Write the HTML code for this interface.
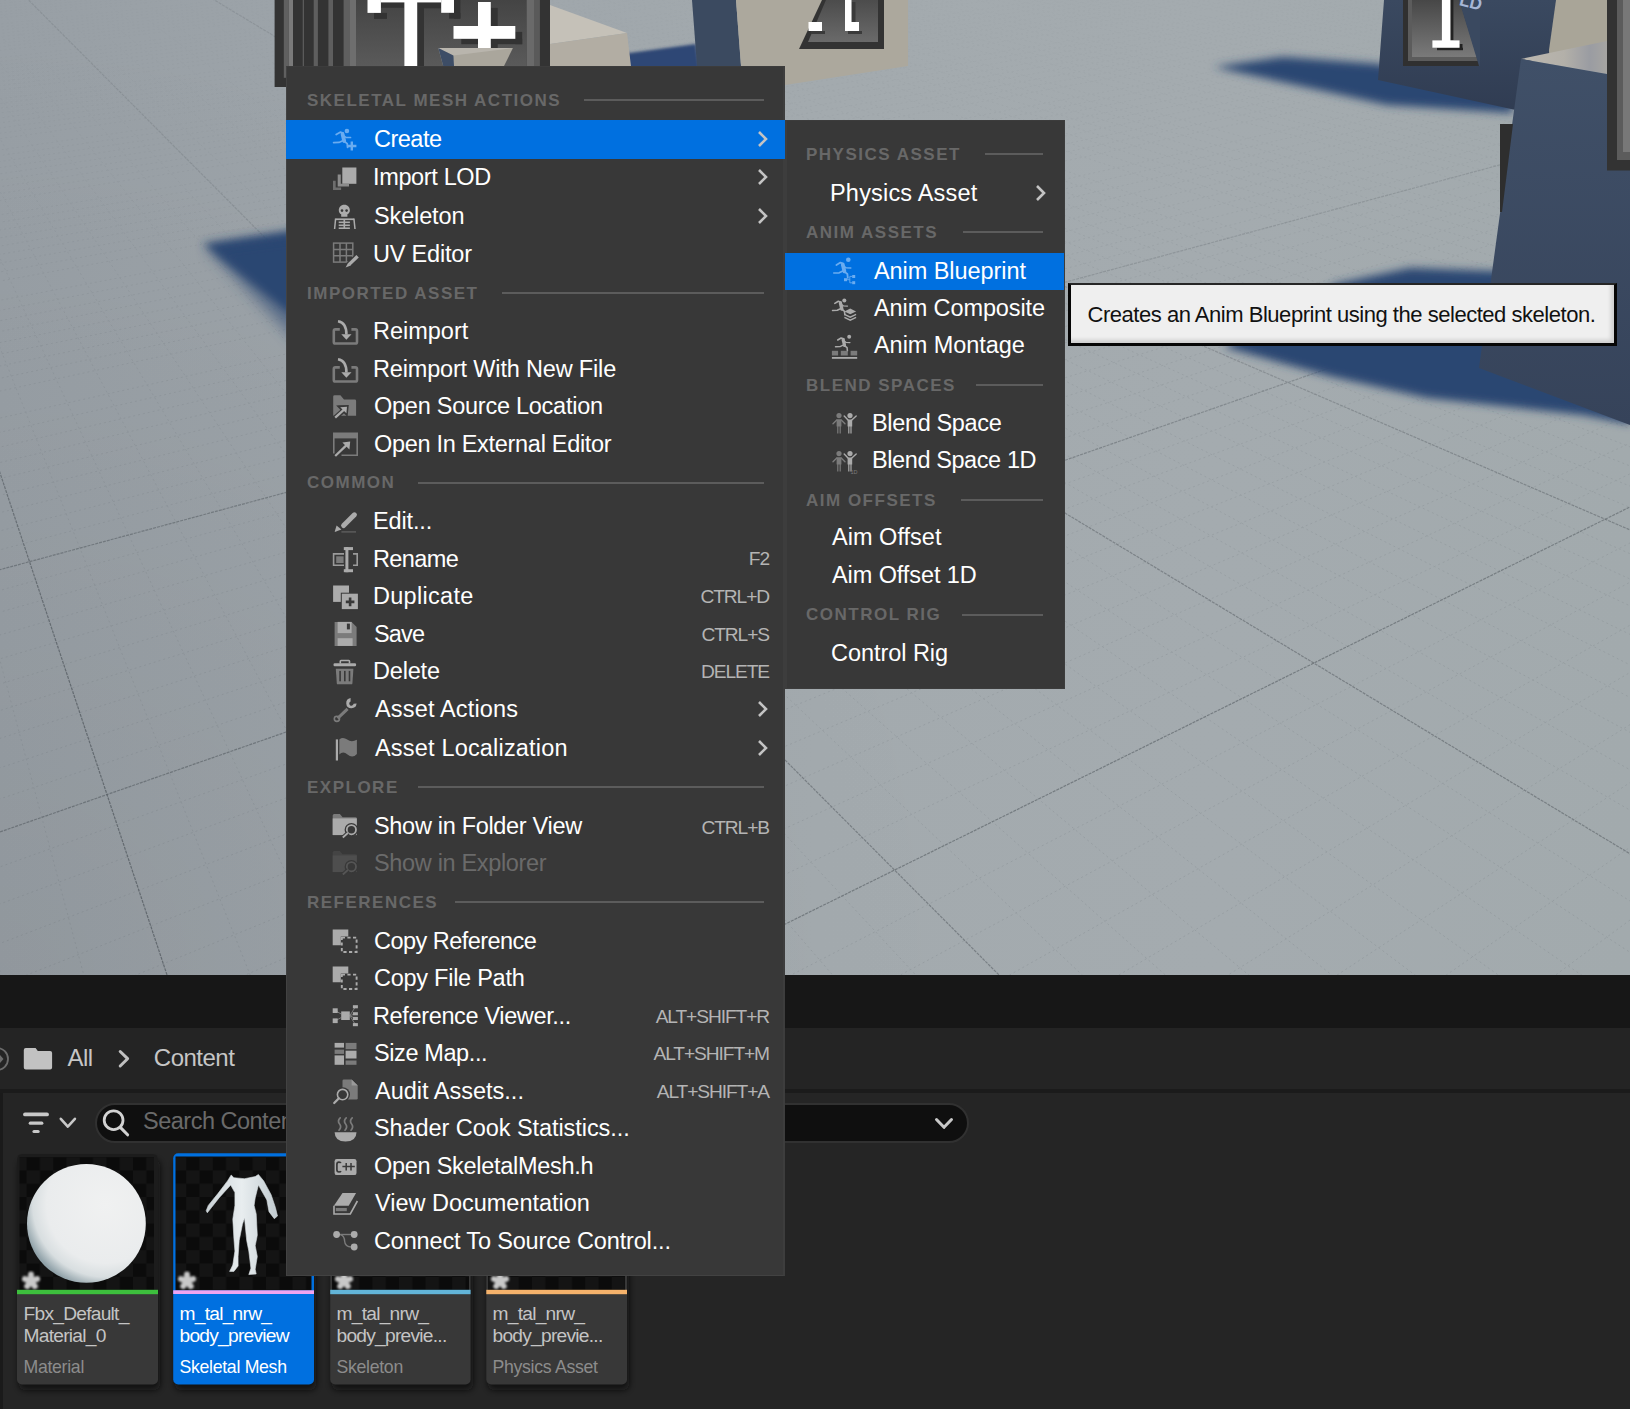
<!DOCTYPE html>
<html><head><meta charset="utf-8"><style>
html,body{margin:0;padding:0}
body{width:1630px;height:1409px;overflow:hidden;position:relative;background:#252525;font-family:"Liberation Sans",sans-serif}
.t{position:absolute;white-space:pre}
.ic{position:absolute;overflow:visible}
</style></head><body>
<svg style="position:absolute;left:0;top:0" width="1630" height="975" viewBox="0 0 1630 975">
<defs>
<linearGradient id="floor" x1="0" y1="0" x2="1" y2="0">
<stop offset="0" stop-color="#989fa5"/><stop offset="0.3" stop-color="#9fa6ab"/><stop offset="0.5" stop-color="#a3aaae"/><stop offset="0.75" stop-color="#a4abaf"/><stop offset="1" stop-color="#a2aaad"/>
</linearGradient>
<radialGradient id="floorv" cx="0" cy="1" r="0.6" gradientUnits="objectBoundingBox" gradientTransform="translate(0,1) scale(1,1.67) translate(0,-1)">
<stop offset="0" stop-color="#000" stop-opacity="0.05"/><stop offset="1" stop-color="#000" stop-opacity="0"/>
</radialGradient>
<filter id="blur6" x="-20%" y="-50%" width="140%" height="200%"><feGaussianBlur stdDeviation="6"/></filter>
<filter id="blur2" x="-20%" y="-50%" width="140%" height="200%"><feGaussianBlur stdDeviation="1.8"/></filter>
<filter id="blur8" x="-50%" y="-50%" width="200%" height="200%"><feGaussianBlur stdDeviation="7"/></filter>
<filter id="blur4" x="-20%" y="-50%" width="140%" height="200%"><feGaussianBlur stdDeviation="4"/></filter>
<linearGradient id="signg" x1="0" y1="0" x2="0" y2="1"><stop offset="0" stop-color="#4c4c4c"/><stop offset="1" stop-color="#6a6a6a"/></linearGradient>
<linearGradient id="signg2" x1="0" y1="0" x2="0" y2="1"><stop offset="0" stop-color="#474747"/><stop offset="1" stop-color="#7a7a7a"/></linearGradient>
<linearGradient id="signg3" x1="0" y1="0" x2="0" y2="1"><stop offset="0" stop-color="#444"/><stop offset="1" stop-color="#5e5e5e"/></linearGradient>
<linearGradient id="topg" x1="1521" y1="0" x2="1607" y2="0" gradientUnits="userSpaceOnUse"><stop offset="0" stop-color="#bcb8b0"/><stop offset="0.5" stop-color="#b3b0a9"/><stop offset="0.8" stop-color="#9a9ca2"/><stop offset="1" stop-color="#a6a5a2"/></linearGradient>
<linearGradient id="cubeg" x1="0" y1="0" x2="0" y2="1"><stop offset="0" stop-color="#405068"/><stop offset="1" stop-color="#36435a"/></linearGradient>
<linearGradient id="panelg" x1="0" y1="0" x2="0" y2="1"><stop offset="0" stop-color="#3a4960"/><stop offset="1" stop-color="#303c52"/></linearGradient>
<linearGradient id="submg" x1="0" y1="0" x2="0" y2="975" gradientUnits="userSpaceOnUse"><stop offset="0" stop-color="#fff" stop-opacity="0.15"/><stop offset="0.35" stop-color="#fff" stop-opacity="0.8"/><stop offset="1" stop-color="#fff" stop-opacity="1"/></linearGradient>
<mask id="subm" maskUnits="userSpaceOnUse" x="0" y="0" width="1630" height="975"><rect x="0" y="0" width="1630" height="975" fill="url(#submg)"/></mask>
<linearGradient id="majmg" x1="0" y1="0" x2="0" y2="975" gradientUnits="userSpaceOnUse"><stop offset="0" stop-color="#fff" stop-opacity="0.35"/><stop offset="0.3" stop-color="#fff" stop-opacity="0.45"/><stop offset="0.52" stop-color="#fff" stop-opacity="0.9"/><stop offset="0.7" stop-color="#fff" stop-opacity="1"/></linearGradient>
<mask id="majm" maskUnits="userSpaceOnUse" x="0" y="0" width="1630" height="975"><rect x="0" y="0" width="1630" height="975" fill="url(#majmg)"/></mask>
</defs>
<rect x="0" y="0" width="1630" height="975" fill="url(#floor)"/>
<rect x="0" y="0" width="1630" height="975" fill="url(#floorv)"/>
<!-- grid lines -->
<path d="M-250.6 -280.4 L-332.5 980.0 M-250.6 -280.4 L-249.0 980.0 M-250.6 -280.4 L-165.5 980.0 M-250.6 -280.4 L-81.9 980.0 M-250.6 -280.4 L1.6 980.0 M-250.6 -280.4 L85.1 980.0 M-250.6 -280.4 L252.2 980.0 M-250.6 -280.4 L335.7 980.0 M-250.6 -280.4 L419.3 980.0 M-250.6 -280.4 L502.8 980.0 M-250.6 -280.4 L586.3 980.0 M-250.6 -280.4 L669.9 980.0 M-250.6 -280.4 L753.4 980.0 M-250.6 -280.4 L836.9 980.0 M-250.6 -280.4 L920.4 980.0 M-250.6 -280.4 L1087.5 980.0 M-250.6 -280.4 L1171.0 980.0 M-250.6 -280.4 L1254.6 980.0 M-250.6 -280.4 L1338.1 980.0 M-250.6 -280.4 L1421.6 980.0 M-250.6 -280.4 L1505.2 980.0 M-250.6 -280.4 L1588.7 980.0 M-250.6 -280.4 L1672.2 980.0 M-250.6 -280.4 L1755.8 980.0 M-250.6 -280.4 L1922.8 980.0 M-250.6 -280.4 L2006.4 980.0 M-250.6 -280.4 L2089.9 980.0 M-250.6 -280.4 L2173.4 980.0 M-250.6 -280.4 L2256.9 980.0 M-250.6 -280.4 L2340.5 980.0 M-250.6 -280.4 L2424.0 980.0 M-250.6 -280.4 L2507.5 980.0 M-250.6 -280.4 L2591.1 980.0 M-250.6 -280.4 L2758.1 980.0 M-250.6 -280.4 L2841.7 980.0 M-250.6 -280.4 L2925.2 980.0 M-250.6 -280.4 L3008.7 980.0 M-250.6 -280.4 L3092.3 980.0 M-250.6 -280.4 L3175.8 980.0 M-250.6 -280.4 L3259.3 980.0 M-250.6 -280.4 L3342.9 980.0 M-250.6 -280.4 L3426.4 980.0 M-250.6 -280.4 L3593.4 980.0 M-250.6 -280.4 L3677.0 980.0 M-250.6 -280.4 L3760.5 980.0 M-250.6 -280.4 L3844.0 980.0 M-250.6 -280.4 L3927.6 980.0 M-250.6 -280.4 L4011.1 980.0 M-250.6 -280.4 L4094.6 980.0 M-250.6 -280.4 L4178.2 980.0 M-250.6 -280.4 L4261.7 980.0 M-250.6 -280.4 L4428.8 980.0 M-250.6 -280.4 L4512.3 980.0 M-250.6 -280.4 L4595.8 980.0 M-250.6 -280.4 L4679.4 980.0 M-250.6 -280.4 L4762.9 980.0 M-250.6 -280.4 L4846.4 980.0 M-250.6 -280.4 L4930.0 980.0 M-250.6 -280.4 L5013.5 980.0 M-250.6 -280.4 L5097.0 980.0 M-250.6 -280.4 L5264.1 980.0 M-250.6 -280.4 L5347.6 980.0 M-250.6 -280.4 L5431.1 980.0 M-250.6 -280.4 L5514.7 980.0 M-250.6 -280.4 L5598.2 980.0 M-250.6 -280.4 L5681.7 980.0 M-250.6 -280.4 L5765.3 980.0 M-250.6 -280.4 L5848.8 980.0 M-250.6 -280.4 L5932.3 980.0 M-250.6 -280.4 L6099.4 980.0 M-250.6 -280.4 L6182.9 980.0 M-250.6 -280.4 L6266.5 980.0 M-250.6 -280.4 L6350.0 980.0 M-250.6 -280.4 L6433.5 980.0 M-250.6 -280.4 L6517.0 980.0 M-250.6 -280.4 L6600.6 980.0 M-250.6 -280.4 L6684.1 980.0 M-250.6 -280.4 L6767.6 980.0 M-250.6 -280.4 L6934.7 980.0 M-250.6 -280.4 L7018.2 980.0 M-250.6 -280.4 L7101.8 980.0 M-250.6 -280.4 L7185.3 980.0 M-250.6 -280.4 L7268.8 980.0 M-250.6 -280.4 L7352.4 980.0 M-250.6 -280.4 L7435.9 980.0 M-250.6 -280.4 L7519.4 980.0 M-250.6 -280.4 L7603.0 980.0 M-250.6 -280.4 L7770.0 980.0 M-250.6 -280.4 L7853.5 980.0 M-250.6 -280.4 L7937.1 980.0 M-250.6 -280.4 L8020.6 980.0 M-250.6 -280.4 L8104.1 980.0 M-250.6 -280.4 L8187.7 980.0 M3315.0 -325.0 L-10070.9 980.0 M3315.0 -325.0 L-9961.3 980.0 M3315.0 -325.0 L-9851.6 980.0 M3315.0 -325.0 L-9742.0 980.0 M3315.0 -325.0 L-9632.4 980.0 M3315.0 -325.0 L-9522.8 980.0 M3315.0 -325.0 L-9413.2 980.0 M3315.0 -325.0 L-9303.5 980.0 M3315.0 -325.0 L-9084.3 980.0 M3315.0 -325.0 L-8974.7 980.0 M3315.0 -325.0 L-8865.1 980.0 M3315.0 -325.0 L-8755.4 980.0 M3315.0 -325.0 L-8645.8 980.0 M3315.0 -325.0 L-8536.2 980.0 M3315.0 -325.0 L-8426.6 980.0 M3315.0 -325.0 L-8317.0 980.0 M3315.0 -325.0 L-8207.3 980.0 M3315.0 -325.0 L-7988.1 980.0 M3315.0 -325.0 L-7878.5 980.0 M3315.0 -325.0 L-7768.9 980.0 M3315.0 -325.0 L-7659.2 980.0 M3315.0 -325.0 L-7549.6 980.0 M3315.0 -325.0 L-7440.0 980.0 M3315.0 -325.0 L-7330.4 980.0 M3315.0 -325.0 L-7220.8 980.0 M3315.0 -325.0 L-7111.1 980.0 M3315.0 -325.0 L-6891.9 980.0 M3315.0 -325.0 L-6782.3 980.0 M3315.0 -325.0 L-6672.7 980.0 M3315.0 -325.0 L-6563.0 980.0 M3315.0 -325.0 L-6453.4 980.0 M3315.0 -325.0 L-6343.8 980.0 M3315.0 -325.0 L-6234.2 980.0 M3315.0 -325.0 L-6124.6 980.0 M3315.0 -325.0 L-6014.9 980.0 M3315.0 -325.0 L-5795.7 980.0 M3315.0 -325.0 L-5686.1 980.0 M3315.0 -325.0 L-5576.5 980.0 M3315.0 -325.0 L-5466.8 980.0 M3315.0 -325.0 L-5357.2 980.0 M3315.0 -325.0 L-5247.6 980.0 M3315.0 -325.0 L-5138.0 980.0 M3315.0 -325.0 L-5028.4 980.0 M3315.0 -325.0 L-4918.7 980.0 M3315.0 -325.0 L-4699.5 980.0 M3315.0 -325.0 L-4589.9 980.0 M3315.0 -325.0 L-4480.3 980.0 M3315.0 -325.0 L-4370.6 980.0 M3315.0 -325.0 L-4261.0 980.0 M3315.0 -325.0 L-4151.4 980.0 M3315.0 -325.0 L-4041.8 980.0 M3315.0 -325.0 L-3932.2 980.0 M3315.0 -325.0 L-3822.5 980.0 M3315.0 -325.0 L-3603.3 980.0 M3315.0 -325.0 L-3493.7 980.0 M3315.0 -325.0 L-3384.1 980.0 M3315.0 -325.0 L-3274.4 980.0 M3315.0 -325.0 L-3164.8 980.0 M3315.0 -325.0 L-3055.2 980.0 M3315.0 -325.0 L-2945.6 980.0 M3315.0 -325.0 L-2836.0 980.0 M3315.0 -325.0 L-2726.3 980.0 M3315.0 -325.0 L-2507.1 980.0 M3315.0 -325.0 L-2397.5 980.0 M3315.0 -325.0 L-2287.9 980.0 M3315.0 -325.0 L-2178.2 980.0 M3315.0 -325.0 L-2068.6 980.0 M3315.0 -325.0 L-1959.0 980.0 M3315.0 -325.0 L-1849.4 980.0 M3315.0 -325.0 L-1739.8 980.0 M3315.0 -325.0 L-1630.1 980.0 M3315.0 -325.0 L-1410.9 980.0 M3315.0 -325.0 L-1301.3 980.0 M3315.0 -325.0 L-1191.7 980.0 M3315.0 -325.0 L-1082.0 980.0 M3315.0 -325.0 L-972.4 980.0 M3315.0 -325.0 L-862.8 980.0 M3315.0 -325.0 L-753.2 980.0 M3315.0 -325.0 L-643.6 980.0 M3315.0 -325.0 L-533.9 980.0 M3315.0 -325.0 L-314.7 980.0 M3315.0 -325.0 L-205.1 980.0 M3315.0 -325.0 L-95.5 980.0 M3315.0 -325.0 L14.2 980.0 M3315.0 -325.0 L123.8 980.0 M3315.0 -325.0 L233.4 980.0 M3315.0 -325.0 L343.0 980.0 M3315.0 -325.0 L452.6 980.0 M3315.0 -325.0 L562.3 980.0 M3315.0 -325.0 L781.5 980.0 M3315.0 -325.0 L891.1 980.0 M3315.0 -325.0 L1000.7 980.0 M3315.0 -325.0 L1110.4 980.0 M3315.0 -325.0 L1220.0 980.0 M3315.0 -325.0 L1329.6 980.0 M3315.0 -325.0 L1439.2 980.0 M3315.0 -325.0 L1548.8 980.0 M3315.0 -325.0 L1658.5 980.0" stroke="#5d646a" stroke-width="1" fill="none" stroke-dasharray="2 3" opacity="0.18" mask="url(#subm)"/>
<g stroke="#4f555b" stroke-width="1.2" fill="none" stroke-dasharray="3 1" mask="url(#majm)">
<path d="M-250.6 -280.4 L168.7 980.0" opacity="0.7"/>
<path d="M-250.6 -280.4 L1004.0 980.0" opacity="0.5"/>
<path d="M-250.6 -280.4 L1839.3 980.0" opacity="0.5"/>
<path d="M-250.6 -280.4 L2674.6 980.0" opacity="0.5"/>
<path d="M3315.0 -325.0 L-1520.5 980.0" opacity="0.55"/>
<path d="M3315.0 -325.0 L-424.3 980.0" opacity="0.55"/>
<path d="M3315.0 -325.0 L671.9 980.0" opacity="0.55"/>
</g>
<!-- shadows -->
<g fill="#2c4672" filter="url(#blur4)">
<polygon points="203,244 300,229.5 300,322"/>
<polygon points="1214,67 1283,57 1378,64 1511,95 1513,113 1387,105 1342,95"/>
<polygon points="1224,347 1335,284 1410,268 1492,271 1630,271 1630,424 1583,415 1427,398 1329,376"/>
</g>
<polygon points="622,54 696,44 702,84 622,84" fill="#2d4675" filter="url(#blur2)"/>
<polygon points="206,248 300,236 300,345" fill="#2c4672" opacity="0.55" filter="url(#blur8)"/>
<!-- T+ sign -->
<rect x="274.6" y="0" width="275.4" height="87" fill="#333"/>
<rect x="283.8" y="0" width="5.1" height="77.8" fill="#606060"/>
<rect x="288.9" y="0" width="4.1" height="77.8" fill="#7a7a7a"/>
<rect x="302.7" y="0" width="1.3" height="77.8" fill="#5a5a5a"/>
<rect x="313.7" y="0" width="4.2" height="77.8" fill="#5e5e5e"/>
<rect x="328.4" y="0" width="4.6" height="77.8" fill="#5e5e5e"/>
<rect x="343.6" y="0" width="6.4" height="77.8" fill="#5f5f5f"/>
<rect x="350" y="0" width="6" height="77.8" fill="#6e6e6e"/>
<rect x="356" y="0" width="170.6" height="77.8" fill="url(#signg3)"/>
<rect x="526.6" y="0" width="7.4" height="77.8" fill="#6a6a6a"/>
<rect x="534" y="0" width="5.9" height="77.8" fill="#5a5a5a"/>
<g fill="#333">
<rect x="380.9" y="2.3" width="23" height="5.5"/><rect x="374" y="12.9" width="13" height="6"/>
<rect x="417.2" y="2.5" width="6.8" height="63.5"/><rect x="424" y="2.5" width="17.2" height="5.8"/>
<rect x="454" y="0" width="6.4" height="18.6"/><rect x="449" y="12.8" width="11.4" height="5.8"/>
<rect x="490.8" y="7.9" width="6.9" height="18.1"/><rect x="515.3" y="31.9" width="6.9" height="12.3"/>
<rect x="461.3" y="38.8" width="60.9" height="5.4"/><rect x="490.8" y="38.8" width="6.9" height="9.2"/>
</g>
<g fill="#fff">
<rect x="367.5" y="0" width="13.4" height="12.9"/><rect x="380.9" y="0" width="60.3" height="2.4"/><rect x="441.2" y="0" width="12.8" height="12.8"/>
<rect x="404.4" y="0" width="12.8" height="66"/>
<rect x="478" y="2" width="12.8" height="46"/><rect x="453.5" y="26" width="61.8" height="12.8"/>
</g>
<polygon points="438.3,48.1 512.9,48.1 504,66 443.2,66" fill="#aaa69c"/>
<polygon points="438.3,48.1 512.9,48.1 453.4,55.5" fill="#b9b5ad"/>
<polygon points="438.3,48.1 453.4,55.5 454,66 443.2,66" fill="#3d4d66"/>
<!-- beige cube -->
<polygon points="550,0 692,0 693,43 631,48 627,33 550,5" fill="none"/>
<polygon points="550,5 627,33 550,44" fill="#c5c1b8"/>
<polygon points="550,44 627,33 631,66 550,66" fill="#b2ada3"/>
<polygon points="692,0 736,0 741,66 697,66" fill="#3b4a60"/>
<polygon points="736,0 908,0 908,66 785,85 745,85 741,66" fill="#aca89d"/>
<polygon points="822,0 884,0 884,49 799,49" fill="#333"/>
<polygon points="826,0 878,0 878,42 808,42" fill="url(#signg)"/>
<g fill="#3a3a3a"><rect x="851.5" y="2" width="4" height="22"/><rect x="811" y="31" width="14" height="3"/><rect x="848" y="31" width="14" height="3"/></g>
<g fill="#fff"><rect x="808.5" y="22" width="13.5" height="9"/><rect x="845" y="0" width="6.5" height="31"/><rect x="845" y="22" width="14" height="9"/></g>
<!-- right blue panel -->
<polygon points="1384,0 1570,0 1570,52 1530,61 1530,113 1378,80" fill="url(#panelg)"/>
<polygon points="1403,0 1480,0 1480,66 1403,66" fill="#303030"/>
<polygon points="1408,0 1459,0 1478,61 1408,61" fill="#5c5c5c"/>
<polygon points="1412,0 1459,0 1477,57 1412,57" fill="url(#signg2)"/>
<polygon points="1459,0 1480,0 1480,66 1479,66" fill="#3a4960"/>
<g fill="#222"><rect x="1450.4" y="0" width="3" height="40"/><rect x="1437" y="47.7" width="26" height="2.5"/><rect x="1459.5" y="44" width="3" height="6"/></g>
<g fill="#fff"><rect x="1441.9" y="0" width="8.5" height="41"/><rect x="1432.4" y="40.4" width="27.1" height="7.3"/></g>
<text x="1459" y="9" font-family="Liberation Sans" font-weight="bold" font-size="17" fill="#a6b6d6" transform="rotate(14 1475 5)">LD</text>
<polygon points="1556,0 1610,0 1610,62 1549.5,62 1549,50" fill="#a9a598"/>
<polygon points="1521,59 1607,41 1607,74" fill="url(#topg)"/>
<polygon points="1521,59 1607,74 1630,78 1630,425 1479,368" fill="url(#cubeg)"/>
<polygon points="1500,124 1513,124 1502,212 1500,212" fill="#2e2e2e"/>
<rect x="1607" y="0" width="23" height="170.5" fill="#333"/>
<rect x="1617" y="0" width="13" height="160" fill="#5c5c5c"/>
<rect x="1623" y="0" width="7" height="152" fill="#787878"/>
</svg>
<div style="position:absolute;left:0;top:975px;width:1630px;height:53px;background:#171717"></div>
<div style="position:absolute;left:0;top:1028px;width:1630px;height:61px;background:#242424"></div>
<div style="position:absolute;left:0;top:1089px;width:1630px;height:4px;background:#1b1b1b"></div>
<div style="position:absolute;left:0;top:1093px;width:1630px;height:316px;background:#252525"></div>
<div style="position:absolute;left:0;top:1093px;width:3px;height:316px;background:#1a1a1a"></div>
<svg class="ic" style="left:0;top:1040px" width="260" height="40" viewBox="0 1040 260 40">
<circle cx="-3" cy="1059" r="11" fill="none" stroke="#6c6c6c" stroke-width="1.8"/>
<path d="M-1 1054 L3.5 1059 L-1 1064 Z" fill="#6c6c6c"/>
<path d="M23.8 1050 Q23.8 1048 25.8 1048 H35.6 L37.8 1051 H50.1 Q52.1 1051 52.1 1053 V1067.5 Q52.1 1069.5 50.1 1069.5 H25.8 Q23.8 1069.5 23.8 1067.5 Z" fill="#c2c2c2"/>
<path d="M120.2 1051.5 L127.6 1058.7 L120.2 1066" fill="none" stroke="#c0c0c0" stroke-width="3" stroke-linecap="round" stroke-linejoin="round"/>
</svg>
<div class="t" style="left:67.5px;top:1046.4px;font-size:24px;line-height:24px;color:#c6c6c6;letter-spacing:-0.5px">All</div>
<div class="t" style="left:153.8px;top:1046.4px;font-size:24px;line-height:24px;color:#c6c6c6;letter-spacing:-0.5px">Content</div>
<svg class="ic" style="left:0;top:1100px" width="100" height="40" viewBox="0 1100 100 40">
<g stroke="#c8c8c8" stroke-linecap="round" fill="none">
<path d="M25 1114.4 H47" stroke-width="3.8"/><path d="M30.3 1123.2 H41.8" stroke-width="3.2"/><path d="M34 1131.5 H38.1" stroke-width="3.2"/>
<path d="M60.8 1118.8 L67.8 1126.6 L74.9 1118.8" stroke-width="2.6" stroke-linejoin="round"/>
</g>
</svg>
<div style="position:absolute;left:95px;top:1103px;width:870px;height:36px;background:#0f0f0f;border:2px solid #313131;border-radius:20px"></div>
<svg class="ic" style="left:95px;top:1100px" width="880" height="50" viewBox="95 1100 880 50">
<circle cx="113.6" cy="1120.2" r="9.4" fill="none" stroke="#d2d2d2" stroke-width="2.8"/>
<path d="M120.6 1127.6 L127.6 1134.8" stroke="#d2d2d2" stroke-width="3" stroke-linecap="round"/>
<path d="M936.5 1119.5 L944 1127.3 L951.5 1119.5" fill="none" stroke="#c8c8c8" stroke-width="3" stroke-linecap="round" stroke-linejoin="round"/>
</svg>
<div class="t" style="left:143px;top:1110.2px;font-size:23.5px;line-height:23.5px;color:#6a6a6a;letter-spacing:-0.5px">Search Content</div>
<!-- tiles -->
<svg class="ic" style="left:0;top:1140px" width="660" height="269" viewBox="0 1140 660 269">
<defs>
<pattern id="chk" x="0" y="0" width="26.6" height="26.6" patternUnits="userSpaceOnUse"><rect width="26.6" height="26.6" fill="#0b0b0b"/><rect width="13.3" height="13.3" fill="#141414"/><rect x="13.3" y="13.3" width="13.3" height="13.3" fill="#141414"/></pattern>
<radialGradient id="sph" cx="0.66" cy="0.34" r="0.9"><stop offset="0" stop-color="#f0f1f1"/><stop offset="0.55" stop-color="#eaeced"/><stop offset="0.68" stop-color="#d8dee0"/><stop offset="0.79" stop-color="#92a3aa"/><stop offset="1" stop-color="#63777f"/></radialGradient>
<filter id="tsh" x="-20%" y="-20%" width="140%" height="140%"><feGaussianBlur stdDeviation="3"/></filter>
<filter id="ab2" x="-10%" y="-10%" width="120%" height="120%"><feGaussianBlur stdDeviation="0.35"/></filter>
<filter id="ab" x="-30%" y="-30%" width="160%" height="160%"><feGaussianBlur stdDeviation="0.8"/></filter>
<linearGradient id="body" x1="0" y1="0" x2="1" y2="0"><stop offset="0" stop-color="#c9d2d6"/><stop offset="0.5" stop-color="#e8edef"/><stop offset="1" stop-color="#c2ccd1"/></linearGradient>
</defs>
<!-- shadows -->
<g fill="#111" opacity="0.8" filter="url(#tsh)">
<rect x="19" y="1160" width="141" height="230" rx="6"/><rect x="175" y="1160" width="141" height="230" rx="6"/><rect x="332" y="1160" width="141" height="230" rx="6"/><rect x="488" y="1160" width="141" height="230" rx="6"/>
</g>
<!-- tile 1 -->
<rect x="17" y="1154" width="141" height="230.5" rx="5" fill="#383838"/>
<path d="M17 1159 Q17 1154 22 1154 H153 Q158 1154 158 1159 V1290 H17 Z" fill="#1c1c1c"/>
<rect x="19.5" y="1157" width="134.5" height="133" fill="url(#chk)"/>
<circle cx="86.4" cy="1223.4" r="59.4" fill="url(#sph)"/>
<rect x="17" y="1289.8" width="141" height="4.4" fill="#3dbf3d"/>
<!-- tile 2 -->
<rect x="173.2" y="1153.2" width="140.8" height="231.3" rx="5" fill="#0070e0"/>
<rect x="175.5" y="1156.5" width="136" height="133.8" fill="url(#chk)"/>
<g filter="url(#ab2)"><path d="M231.2,1175 L233.9,1177.7 L244.5,1178.7 L255.2,1176.6 L258.4,1174.5 L263.7,1180.9 L271.1,1194.7 L275.4,1207.5 L277.5,1216 L274.3,1218.7 L269,1211.7 L266.9,1200 L258.4,1185.1 L255.2,1197.9 L254.1,1205.4 L256.2,1213.9 L257.3,1235.2 L255.2,1245.8 L257.3,1256.5 L255.2,1269.2 L256.2,1274 L248.8,1274.6 L250.9,1268.2 L248.8,1251.1 L246.7,1240.5 L244.5,1218.1 L242.4,1224.5 L239.2,1240.5 L238.1,1256.5 L238.1,1266 L233.9,1271.4 L229.6,1271.4 L232.8,1265 L234.9,1251.1 L233.9,1238.4 L232.8,1219.2 L234.9,1205.4 L234.9,1192.6 L230.7,1185.1 L219,1197.9 L211.5,1207.5 L207.3,1212.8 L206.2,1210.7 L208.3,1205.4 L217.9,1193.6 L227.5,1180.9 Z" fill="url(#body)" stroke="#d6dde0" stroke-width="0.6" stroke-linejoin="round"/></g>
<rect x="173.2" y="1290.3" width="140.8" height="3.7" fill="#f0a4f0"/>
<!-- tile 3 -->
<rect x="330.2" y="1154" width="140.4" height="230.5" rx="5" fill="#383838"/>
<rect x="332" y="1157" width="137" height="133" fill="url(#chk)"/>
<rect x="330.2" y="1289.8" width="140.4" height="4.4" fill="#62b4d8"/>
<!-- tile 4 -->
<rect x="486.3" y="1154" width="140.7" height="230.5" rx="5" fill="#383838"/>
<rect x="488" y="1157" width="137" height="133" fill="url(#chk)"/>
<rect x="486.3" y="1289.8" width="140.7" height="4.4" fill="#f5b26b"/>
<!-- asterisks -->
<g filter="url(#ab)">
<g transform="translate(31,1281)"><g id="ast" stroke="#c8c8c8" stroke-width="5.8" stroke-linecap="round" fill="none"><path d="M0 0 L0.00 -6.50"/><path d="M0 0 L6.18 -2.01"/><path d="M0 0 L3.82 5.26"/><path d="M0 0 L-3.82 5.26"/><path d="M0 0 L-6.18 -2.01"/></g></g><g transform="translate(187,1281)"><use href="#ast"/></g><g transform="translate(344,1281)"><use href="#ast"/></g><g transform="translate(500,1281)"><use href="#ast"/></g>
</g>
</svg>
<div class="t" style="left:23.5px;top:1303.9px;font-size:19.2px;line-height:19.2px;color:#c4c4c4;letter-spacing:-0.75px">Fbx_Default_</div>
<div class="t" style="left:23.5px;top:1325.7px;font-size:19.2px;line-height:19.2px;color:#c4c4c4;letter-spacing:-0.75px">Material_0</div>
<div class="t" style="left:23.5px;top:1358.7px;font-size:17.7px;line-height:17.7px;color:#8c8c8c;letter-spacing:-0.3px">Material</div>
<div class="t" style="left:179.5px;top:1303.9px;font-size:19.2px;line-height:19.2px;color:#ffffff;letter-spacing:-0.75px">m_tal_nrw_</div>
<div class="t" style="left:179.5px;top:1325.7px;font-size:19.2px;line-height:19.2px;color:#ffffff;letter-spacing:-0.75px">body_preview</div>
<div class="t" style="left:179.5px;top:1358.7px;font-size:17.7px;line-height:17.7px;color:#ffffff;letter-spacing:-0.3px">Skeletal Mesh</div>
<div class="t" style="left:336.5px;top:1303.9px;font-size:19.2px;line-height:19.2px;color:#c4c4c4;letter-spacing:-0.75px">m_tal_nrw_</div>
<div class="t" style="left:336.5px;top:1325.7px;font-size:19.2px;line-height:19.2px;color:#c4c4c4;letter-spacing:-0.75px">body_previe...</div>
<div class="t" style="left:336.5px;top:1358.7px;font-size:17.7px;line-height:17.7px;color:#8c8c8c;letter-spacing:-0.3px">Skeleton</div>
<div class="t" style="left:492.5px;top:1303.9px;font-size:19.2px;line-height:19.2px;color:#c4c4c4;letter-spacing:-0.75px">m_tal_nrw_</div>
<div class="t" style="left:492.5px;top:1325.7px;font-size:19.2px;line-height:19.2px;color:#c4c4c4;letter-spacing:-0.75px">body_previe...</div>
<div class="t" style="left:492.5px;top:1358.7px;font-size:17.7px;line-height:17.7px;color:#8c8c8c;letter-spacing:-0.3px">Physics Asset</div>
<div style="position:absolute;left:286px;top:66px;width:497px;height:1208px;background:#383838;border:1px solid #424242;border-top-color:#3c3c3c;border-right:2px solid #3d3d3d;width:496px"></div>
<div style="position:absolute;left:286px;top:120px;width:499px;height:39px;background:#0070e0"></div>
<div class="t" style="left:307px;top:91.51px;font-size:17px;line-height:17px;color:#686868;letter-spacing:1.5px;font-weight:bold;">SKELETAL MESH ACTIONS</div>
<div style="position:absolute;left:584px;top:98.9px;width:180px;height:2px;background:#5c5c5c"></div>
<svg class="ic" style="left:333px;top:127.70px" width="24" height="24" viewBox="0 0 24 24"><g transform="translate(0.0,0.0) scale(1.0)"><circle cx="13.9" cy="2.95" r="2.3" fill="#6aacf0"/><path d="M3.2 6.6 L7.2 4.2 L10.2 5.2" fill="none" stroke="#6aacf0" stroke-width="1.8" stroke-linecap="round" stroke-linejoin="round"/><path d="M9.6 6.2 L11.2 13.0" fill="none" stroke="#6aacf0" stroke-width="3.8" stroke-linecap="round"/><path d="M11.2 8.2 L12.9 9.4 L17.6 9.6" fill="none" stroke="#6aacf0" stroke-width="1.5" stroke-linecap="round" stroke-linejoin="round"/><path d="M10.2 12.4 L6.0 14.4 L0.6 14.6" fill="none" stroke="#6aacf0" stroke-width="1.7" stroke-linecap="round" stroke-linejoin="round"/><path d="M11.2 13.2 L14.2 15.6 L14.6 19.4" fill="none" stroke="#6aacf0" stroke-width="1.8" stroke-linecap="round" stroke-linejoin="round"/></g><path d="M18.8 13.4 V22.6 M14.2 18 H23.4" stroke="#6aacf0" stroke-width="2.4" fill="none"/></svg>
<div class="t" style="left:374px;top:127.81px;font-size:23.5px;line-height:23.5px;color:#ffffff;letter-spacing:-0.5px;">Create</div>
<svg class="ic" style="left:755px;top:129.7px" width="16" height="18" viewBox="0 0 16 18"><path d="M4 2 L11 9 L4 16" fill="none" stroke="#c4c4c4" stroke-width="2.6"/></svg>
<svg class="ic" style="left:333px;top:166.00px" width="24" height="24" viewBox="0 0 24 24"><rect x="9.3" y="1.5" width="14.1" height="16.3" fill="#ababab"/><path d="M4.7 8.6 H7.8 V17.8 H16 V20.6 H4.7 Z" fill="#8c8c8c"/><path d="M0 14.7 H2.7 V21.4 H8.1 V24 H0 Z" fill="#6e6e6e"/></svg>
<div class="t" style="left:373px;top:166.11px;font-size:23.5px;line-height:23.5px;color:#ffffff;letter-spacing:-0.356px;">Import LOD</div>
<svg class="ic" style="left:755px;top:168.0px" width="16" height="18" viewBox="0 0 16 18"><path d="M4 2 L11 9 L4 16" fill="none" stroke="#c4c4c4" stroke-width="2.6"/></svg>
<svg class="ic" style="left:333px;top:204.70px" width="24" height="24" viewBox="0 0 24 24"><path d="M11.3 -0.3 C7.8 -0.3 5.8 2.2 5.8 5.2 C5.8 7.3 6.8 8.6 8.2 9.3 V11.8 H14.4 V9.3 C15.8 8.6 16.9 7.3 16.9 5.2 C16.9 2.2 14.8 -0.3 11.3 -0.3 Z" fill="#ababab"/><circle cx="9.0" cy="5.6" r="1.3" fill="#383838"/><circle cx="13.6" cy="5.6" r="1.3" fill="#383838"/><rect x="2.4" y="13.4" width="18.8" height="1.7" fill="#ababab"/><path d="M2.6 13.6 L1.6 24 M20.9 13.6 L22 24" stroke="#ababab" stroke-width="1.5" fill="none"/><rect x="5.7" y="16.5" width="11.2" height="1.6" fill="#ababab"/><rect x="5.7" y="19.5" width="11.2" height="1.6" fill="#ababab"/><rect x="5.7" y="22.4" width="11.2" height="1.6" fill="#ababab"/><rect x="10.5" y="15" width="1.6" height="9" fill="#ababab"/></svg>
<div class="t" style="left:374px;top:204.81px;font-size:23.5px;line-height:23.5px;color:#ffffff;letter-spacing:-0.143px;">Skeleton</div>
<svg class="ic" style="left:755px;top:206.7px" width="16" height="18" viewBox="0 0 16 18"><path d="M4 2 L11 9 L4 16" fill="none" stroke="#c4c4c4" stroke-width="2.6"/></svg>
<svg class="ic" style="left:333px;top:242.70px" width="24" height="24" viewBox="0 0 24 24"><g stroke="#7b7b7b" stroke-width="1.5" fill="none"><rect x="0.6" y="0.1" width="19.2" height="19"/><path d="M7 0.1 V19.1 M13.4 0.1 V19.1 M0.6 6.4 H19.8 M0.6 12.8 H19.8"/></g><path d="M24.8 13.0 L15.6 22.2" stroke="#383838" stroke-width="6" fill="none"/><path d="M24.6 13.2 L16.2 21.4" stroke="#ababab" stroke-width="3.4" fill="none"/><path d="M15.2 19.8 L17.8 22.6 L12.6 24.4 Z" fill="#ababab"/></svg>
<div class="t" style="left:373px;top:242.81px;font-size:23.5px;line-height:23.5px;color:#ffffff;letter-spacing:-0.188px;">UV Editor</div>
<div class="t" style="left:307px;top:284.61px;font-size:17px;line-height:17px;color:#686868;letter-spacing:1.5px;font-weight:bold;">IMPORTED ASSET</div>
<div style="position:absolute;left:502px;top:292.0px;width:262px;height:2px;background:#5c5c5c"></div>
<svg class="ic" style="left:333px;top:319.90px" width="24" height="24" viewBox="0 0 24 24"><path d="M6.8 9.4 H2.4 Q0.8 9.4 0.8 11 V21.9 Q0.8 23.5 2.4 23.5 H22.4 Q24 23.5 24 21.9 V11 Q24 9.4 22.4 9.4 H18.4" stroke="#7b7b7b" stroke-width="2.6" fill="none"/><path d="M5 1.2 Q13.6 2.6 13.4 14.6" stroke="#ababab" stroke-width="2.6" fill="none"/><path d="M8.3 14.2 H18.5 L13.4 19.8 Z" fill="#ababab"/></svg>
<div class="t" style="left:373px;top:320.01px;font-size:23.5px;line-height:23.5px;color:#ffffff;letter-spacing:-0.014px;">Reimport</div>
<svg class="ic" style="left:333px;top:357.90px" width="24" height="24" viewBox="0 0 24 24"><path d="M6.8 9.4 H2.4 Q0.8 9.4 0.8 11 V21.9 Q0.8 23.5 2.4 23.5 H22.4 Q24 23.5 24 21.9 V11 Q24 9.4 22.4 9.4 H18.4" stroke="#7b7b7b" stroke-width="2.6" fill="none"/><path d="M5 1.2 Q13.6 2.6 13.4 14.6" stroke="#ababab" stroke-width="2.6" fill="none"/><path d="M8.3 14.2 H18.5 L13.4 19.8 Z" fill="#ababab"/></svg>
<div class="t" style="left:373px;top:358.01px;font-size:23.5px;line-height:23.5px;color:#ffffff;letter-spacing:-0.171px;">Reimport With New File</div>
<svg class="ic" style="left:333px;top:395.00px" width="24" height="24" viewBox="0 0 24 24"><path d="M0.2 1.6 Q0.2 0.2 1.6 0.2 H7.4 L11 4.6 H21.8 Q23.1 4.6 23.1 5.9 V20.7 H0.2 Z" fill="#7b7b7b"/><path d="M1.2 23.6 L11.4 14.6" stroke="#383838" stroke-width="5" fill="none"/><path d="M6 11.6 L14.4 11.2 L13.6 19.2 Z" fill="#383838" stroke="#383838" stroke-width="2.5"/><path d="M2.2 22.7 L11 14.6" stroke="#ababab" stroke-width="2.3" fill="none"/><path d="M7.2 12.2 L14 11.8 L13.4 18.2 Z" fill="#ababab"/></svg>
<div class="t" style="left:374px;top:395.11px;font-size:23.5px;line-height:23.5px;color:#ffffff;letter-spacing:-0.253px;">Open Source Location</div>
<svg class="ic" style="left:333px;top:432.50px" width="24" height="24" viewBox="0 0 24 24"><path d="M0.8 20.5 V0.4 H24.2 V22.3 H8.5" stroke="#7b7b7b" stroke-width="1.6" fill="none"/><rect x="0.8" y="0.4" width="23.4" height="5" fill="#7b7b7b"/><path d="M2.2 23 L14.6 11.2" stroke="#ababab" stroke-width="2.3" fill="none"/><path d="M9.4 9.4 L17.2 8.6 L16.4 16.4 Z" fill="#ababab"/></svg>
<div class="t" style="left:374px;top:432.61px;font-size:23.5px;line-height:23.5px;color:#ffffff;letter-spacing:-0.3px;">Open In External Editor</div>
<div class="t" style="left:307px;top:474.31px;font-size:17px;line-height:17px;color:#686868;letter-spacing:1.5px;font-weight:bold;">COMMON</div>
<div style="position:absolute;left:418px;top:481.7px;width:346px;height:2px;background:#5c5c5c"></div>
<svg class="ic" style="left:333px;top:510.20px" width="24" height="24" viewBox="0 0 24 24"><path d="M21.4 4.8 L10.6 15.6" stroke="#ababab" stroke-width="5" stroke-linecap="round" fill="none"/><path d="M1.6 21.9 L3.6 15.4 L8.4 19.6 Z" fill="#ababab"/><rect x="8.4" y="21.2" width="14.6" height="1.4" fill="#5e5e5e"/></svg>
<div class="t" style="left:373px;top:510.31px;font-size:23.5px;line-height:23.5px;color:#ffffff;letter-spacing:-0.15px;">Edit...</div>
<svg class="ic" style="left:333px;top:547.80px" width="24" height="24" viewBox="0 0 24 24"><path d="M13.9 -0.9 V24.2" stroke="#ababab" stroke-width="3" fill="none"/><rect x="10.8" y="-0.9" width="9.2" height="3" fill="#ababab"/><rect x="10.8" y="21.2" width="9.2" height="3" fill="#ababab"/><path d="M11 5.9 H0.6 V17.3 H11" stroke="#ababab" stroke-width="1.6" fill="none" opacity="0.85"/><rect x="3.2" y="8.3" width="7.4" height="6.7" fill="#7b7b7b"/><path d="M20 5.9 H24.2 V17.3 H20" stroke="#ababab" stroke-width="1.6" fill="none" opacity="0.85"/></svg>
<div class="t" style="left:373px;top:547.91px;font-size:23.5px;line-height:23.5px;color:#ffffff;letter-spacing:-0.62px;">Rename</div>
<div class="t" style="right:861px;top:549.05px;font-size:19.2px;line-height:19.2px;color:#b4b4b4;letter-spacing:-1.1px;">F2</div>
<svg class="ic" style="left:333px;top:584.70px" width="24" height="24" viewBox="0 0 24 24"><rect x="0.1" y="0.5" width="15.9" height="16.4" fill="#ababab"/><rect x="7.8" y="7.7" width="18.1" height="17.4" fill="#383838"/><rect x="8.8" y="8.7" width="16.1" height="15.4" fill="#ababab"/><path d="M17.1 12.6 V21.2 M12.8 16.9 H21.4" stroke="#383838" stroke-width="2.6" fill="none"/></svg>
<div class="t" style="left:373px;top:584.81px;font-size:23.5px;line-height:23.5px;color:#ffffff;letter-spacing:0.288px;">Duplicate</div>
<div class="t" style="right:861px;top:587.45px;font-size:19.2px;line-height:19.2px;color:#b4b4b4;letter-spacing:-1.1px;">CTRL+D</div>
<svg class="ic" style="left:333px;top:622.70px" width="24" height="24" viewBox="0 0 24 24"><path d="M1.6 -1.1 H18.6 L23.6 3.9 V22.9 H1.6 Z" fill="#7b7b7b"/><rect x="4.6" y="-1.1" width="14" height="11.2" fill="#ababab"/><rect x="13.9" y="0.6" width="3" height="5.8" fill="#383838"/><rect x="4.6" y="15.2" width="15" height="7.7" fill="#ababab"/></svg>
<div class="t" style="left:374px;top:622.81px;font-size:23.5px;line-height:23.5px;color:#ffffff;letter-spacing:-0.867px;">Save</div>
<div class="t" style="right:861px;top:625.45px;font-size:19.2px;line-height:19.2px;color:#b4b4b4;letter-spacing:-1.1px;">CTRL+S</div>
<svg class="ic" style="left:333px;top:659.60px" width="24" height="24" viewBox="0 0 24 24"><rect x="0.5" y="3.2" width="22.6" height="3.1" rx="1.2" fill="#ababab"/><path d="M7.3 3.4 V1.2 Q7.3 0.5 8 0.5 H15.8 Q16.5 0.5 16.5 1.2 V3.4" stroke="#ababab" stroke-width="1.6" fill="none"/><path d="M2.8 8.7 H20.4 L19.4 23.4 Q19.3 24.3 18.4 24.3 H4.8 Q3.9 24.3 3.8 23.4 Z" fill="#7b7b7b"/><rect x="6.3" y="10.9" width="1.6" height="10.4" fill="#383838"/><rect x="11" y="10.9" width="1.6" height="10.4" fill="#383838"/><rect x="15.7" y="10.9" width="1.6" height="10.4" fill="#383838"/></svg>
<div class="t" style="left:373px;top:659.71px;font-size:23.5px;line-height:23.5px;color:#ffffff;letter-spacing:-0.18px;">Delete</div>
<div class="t" style="right:861px;top:662.35px;font-size:19.2px;line-height:19.2px;color:#b4b4b4;letter-spacing:-1.1px;">DELETE</div>
<svg class="ic" style="left:333px;top:697.80px" width="24" height="24" viewBox="0 0 24 24"><path d="M14.6 10.8 L4.6 20.4" stroke="#7b7b7b" stroke-width="3" fill="none"/><circle cx="3.9" cy="20.8" r="2.6" fill="none" stroke="#7b7b7b" stroke-width="1.6"/><path d="M23.6 5.6 A5.2 5.2 0 1 1 17.6 -0.1 L17.6 3.4 A2.2 2.2 0 1 0 20.6 5.8 Z" fill="#ababab"/></svg>
<div class="t" style="left:375px;top:697.91px;font-size:23.5px;line-height:23.5px;color:#ffffff;letter-spacing:0.158px;">Asset Actions</div>
<svg class="ic" style="left:755px;top:699.8px" width="16" height="18" viewBox="0 0 16 18"><path d="M4 2 L11 9 L4 16" fill="none" stroke="#c4c4c4" stroke-width="2.6"/></svg>
<svg class="ic" style="left:333px;top:736.60px" width="24" height="24" viewBox="0 0 24 24"><rect x="2.8" y="2.4" width="2.2" height="21.1" fill="#ababab"/><path d="M6.3 2.4 Q10 -0.6 14.2 2.6 Q18.5 5.8 23.9 2.8 V17 Q19.5 21.8 14.5 17.4 Q10 13.8 6.3 17.4 Z" fill="#7b7b7b"/></svg>
<div class="t" style="left:375px;top:736.71px;font-size:23.5px;line-height:23.5px;color:#ffffff;letter-spacing:0.182px;">Asset Localization</div>
<svg class="ic" style="left:755px;top:738.6px" width="16" height="18" viewBox="0 0 16 18"><path d="M4 2 L11 9 L4 16" fill="none" stroke="#c4c4c4" stroke-width="2.6"/></svg>
<div class="t" style="left:307px;top:778.81px;font-size:17px;line-height:17px;color:#686868;letter-spacing:1.5px;font-weight:bold;">EXPLORE</div>
<div style="position:absolute;left:418px;top:786.2px;width:346px;height:2px;background:#5c5c5c"></div>
<svg class="ic" style="left:333px;top:814.80px" width="24" height="24" viewBox="0 0 24 24"><path d="M-0.3 0.6 Q-0.3 -0.9 1.2 -0.9 H6.9 L9.6 2.2 H22.4 Q23.8 2.2 23.8 3.6 V20.1 H-0.3 Z" fill="#7b7b7b"/><path d="M-0.3 3.4 H23.8 V20.1 H-0.3 Z" fill="#ababab"/><circle cx="18.4" cy="14.7" r="6.8" fill="#383838"/><circle cx="18.4" cy="14.7" r="4.6" fill="#383838" stroke="#ababab" stroke-width="1.8"/><path d="M15.2 17.8 L9.8 22.5" stroke="#383838" stroke-width="4" fill="none"/><path d="M15.2 17.8 L9.8 22.5" stroke="#ababab" stroke-width="1.8" fill="none"/></svg>
<div class="t" style="left:374px;top:814.91px;font-size:23.5px;line-height:23.5px;color:#ffffff;letter-spacing:-0.311px;">Show in Folder View</div>
<div class="t" style="right:861px;top:817.55px;font-size:19.2px;line-height:19.2px;color:#b4b4b4;letter-spacing:-1.1px;">CTRL+B</div>
<svg class="ic" style="left:333px;top:851.70px" width="24" height="24" viewBox="0 0 24 24"><path d="M-0.3 0.6 Q-0.3 -0.9 1.2 -0.9 H6.9 L9.6 2.2 H22.4 Q23.8 2.2 23.8 3.6 V20.1 H-0.3 Z" fill="#444"/><path d="M-0.3 3.4 H23.8 V20.1 H-0.3 Z" fill="#4e4e4e"/><circle cx="18.4" cy="14.7" r="6.8" fill="#383838"/><circle cx="18.4" cy="14.7" r="4.6" fill="#383838" stroke="#555555" stroke-width="1.8"/><path d="M15.2 17.8 L9.8 22.5" stroke="#383838" stroke-width="4" fill="none"/><path d="M15.2 17.8 L9.8 22.5" stroke="#555555" stroke-width="1.8" fill="none"/></svg>
<div class="t" style="left:374px;top:851.81px;font-size:23.5px;line-height:23.5px;color:#6a6a6a;letter-spacing:-0.333px;">Show in Explorer</div>
<div class="t" style="left:307px;top:893.61px;font-size:17px;line-height:17px;color:#686868;letter-spacing:1.5px;font-weight:bold;">REFERENCES</div>
<div style="position:absolute;left:455px;top:901.0px;width:309px;height:2px;background:#5c5c5c"></div>
<svg class="ic" style="left:333px;top:929.60px" width="24" height="24" viewBox="0 0 24 24"><path d="M-0.3 -0.4 H15.3 V6.6 H7.8 V15.2 H-0.3 Z" fill="#ababab"/><rect x="8.8" y="7.6" width="14.8" height="14.4" fill="none" stroke="#ababab" stroke-width="1.9" stroke-dasharray="3.2 2.4"/></svg>
<div class="t" style="left:374px;top:929.71px;font-size:23.5px;line-height:23.5px;color:#ffffff;letter-spacing:-0.531px;">Copy Reference</div>
<svg class="ic" style="left:333px;top:966.50px" width="24" height="24" viewBox="0 0 24 24"><path d="M-0.3 -0.4 H15.3 V6.6 H7.8 V15.2 H-0.3 Z" fill="#ababab"/><rect x="8.8" y="7.6" width="14.8" height="14.4" fill="none" stroke="#ababab" stroke-width="1.9" stroke-dasharray="3.2 2.4"/></svg>
<div class="t" style="left:374px;top:966.61px;font-size:23.5px;line-height:23.5px;color:#ffffff;letter-spacing:-0.262px;">Copy File Path</div>
<svg class="ic" style="left:333px;top:1004.60px" width="24" height="24" viewBox="0 0 24 24"><g stroke="#7b7b7b" stroke-width="1" fill="none"><path d="M2.2 5.6 L8.2 9 M2.2 15.8 L8.2 12.6 M16.8 10.7 L22.4 1.8 M16.8 10.7 L22.4 8.8 M16.8 10.7 L22.4 13.4 M16.8 10.7 L22.4 19.6"/></g><rect x="8.2" y="6.4" width="8.6" height="8.6" fill="#ababab"/><rect x="-0.3" y="3.3" width="5" height="4.7" fill="#ababab"/><rect x="-0.3" y="13.4" width="5" height="4.7" fill="#ababab"/><rect x="19.9" y="0.2" width="5" height="3.1" fill="#ababab"/><rect x="19.9" y="7.2" width="5" height="3.1" fill="#ababab"/><rect x="19.9" y="11.9" width="5" height="3.1" fill="#ababab"/><rect x="19.9" y="18.1" width="5" height="3.1" fill="#ababab"/></svg>
<div class="t" style="left:373px;top:1004.71px;font-size:23.5px;line-height:23.5px;color:#ffffff;letter-spacing:-0.356px;">Reference Viewer...</div>
<div class="t" style="right:861px;top:1007.35px;font-size:19.2px;line-height:19.2px;color:#b4b4b4;letter-spacing:-1.1px;">ALT+SHIFT+R</div>
<svg class="ic" style="left:333px;top:1041.50px" width="24" height="24" viewBox="0 0 24 24"><rect x="1.6" y="0.9" width="9.4" height="4.7" fill="#ababab"/><rect x="1.6" y="7.6" width="9.4" height="4.3" fill="#7b7b7b"/><rect x="1.6" y="13.4" width="9.4" height="9.4" fill="#ababab"/><rect x="12.6" y="0.9" width="10.9" height="6.3" fill="#7b7b7b"/><rect x="12.6" y="8.7" width="10.9" height="7.8" fill="#ababab"/><rect x="12.6" y="18.5" width="10.9" height="4.3" fill="#7b7b7b"/></svg>
<div class="t" style="left:374px;top:1041.61px;font-size:23.5px;line-height:23.5px;color:#ffffff;letter-spacing:-0.4px;">Size Map...</div>
<div class="t" style="right:861px;top:1044.25px;font-size:19.2px;line-height:19.2px;color:#b4b4b4;letter-spacing:-1.1px;">ALT+SHIFT+M</div>
<svg class="ic" style="left:333px;top:1079.70px" width="24" height="24" viewBox="0 0 24 24"><path d="M10.8 -0.6 H18.6 L24.7 5.4 V18.2 Q24.7 19.4 23.5 19.4 H10.8 Q9.5 19.4 9.5 18.2 V0.7 Q9.5 -0.6 10.8 -0.6 Z" fill="#7b7b7b"/><path d="M18.6 -0.6 V5.4 H24.7 Z" fill="#9a9a9a"/><circle cx="9.6" cy="14.6" r="7.4" fill="#383838"/><circle cx="9.6" cy="14.6" r="5.2" fill="#383838" stroke="#ababab" stroke-width="1.6"/><path d="M5.8 18.4 L1.2 23" stroke="#ababab" stroke-width="2.2" stroke-linecap="round" fill="none"/></svg>
<div class="t" style="left:375px;top:1079.81px;font-size:23.5px;line-height:23.5px;color:#ffffff;letter-spacing:0.0px;">Audit Assets...</div>
<div class="t" style="right:861px;top:1082.45px;font-size:19.2px;line-height:19.2px;color:#b4b4b4;letter-spacing:-1.1px;">ALT+SHIFT+A</div>
<svg class="ic" style="left:333px;top:1116.60px" width="24" height="24" viewBox="0 0 24 24"><path d="M1.6 15.3 H23.5 Q23.3 24.6 12.5 24.6 Q1.8 24.6 1.6 15.3 Z" fill="#ababab"/><g stroke="#7b7b7b" stroke-width="1.7" fill="none" stroke-linecap="round"><path d="M7.199999999999999 0.9 C5.0 3 5.0 5 6.6 7 C8.2 9 8.0 11 6.0 13.2"/><path d="M13.2 0.9 C11.0 3 11.0 5 12.6 7 C14.2 9 14.0 11 12.0 13.2"/><path d="M19.200000000000003 0.9 C17.0 3 17.0 5 18.6 7 C20.200000000000003 9 20.0 11 18.0 13.2"/></g></svg>
<div class="t" style="left:374px;top:1116.71px;font-size:23.5px;line-height:23.5px;color:#ffffff;letter-spacing:-0.067px;">Shader Cook Statistics...</div>
<svg class="ic" style="left:333px;top:1154.50px" width="24" height="24" viewBox="0 0 24 24"><rect x="1.6" y="4" width="21.9" height="16.1" rx="2.2" fill="#ababab"/><path d="M7.8 8.2 Q7.6 7.2 6 7.2 Q3.9 7.2 3.9 9.4 V14.8 Q3.9 17 6 17 Q7.6 17 7.8 16" stroke="#383838" stroke-width="1.7" fill="none"/><path d="M9.4 11.6 H21.8 M13.2 8 V15.4 M18 8 V15.4" stroke="#383838" stroke-width="1.5" fill="none"/></svg>
<div class="t" style="left:374px;top:1154.61px;font-size:23.5px;line-height:23.5px;color:#ffffff;letter-spacing:-0.278px;">Open SkeletalMesh.h</div>
<svg class="ic" style="left:333px;top:1191.40px" width="24" height="24" viewBox="0 0 24 24"><path d="M0.9 14.8 L9.5 1.9 H23.1 L15.7 14.8 Z" fill="#ababab"/><path d="M1 14.8 V23 H17.3 L24.4 10" stroke="#ababab" stroke-width="1.6" fill="none"/><rect x="2.8" y="17" width="11" height="3.2" fill="#7b7b7b"/></svg>
<div class="t" style="left:375px;top:1191.51px;font-size:23.5px;line-height:23.5px;color:#ffffff;letter-spacing:-0.012px;">View Documentation</div>
<svg class="ic" style="left:333px;top:1229.80px" width="24" height="24" viewBox="0 0 24 24"><g stroke="#7b7b7b" stroke-width="1.4" fill="none"><path d="M3.6 4.5 H21.2"/><path d="M7.6 4.6 Q11.4 6 11.6 11 Q12 17 18.6 17"/></g><circle cx="3.6" cy="4.5" r="3.4" fill="#ababab"/><circle cx="21.2" cy="4.5" r="3.4" fill="#ababab"/><circle cx="21.2" cy="17" r="3.4" fill="#ababab"/></svg>
<div class="t" style="left:374px;top:1229.91px;font-size:23.5px;line-height:23.5px;color:#ffffff;letter-spacing:-0.163px;">Connect To Source Control...</div>
<div style="position:absolute;left:785px;top:120px;width:277px;height:567px;background:#383838;border:1px solid #3c3c3c;border-left:2px solid #3d3d3d"></div>
<div style="position:absolute;left:785px;top:253px;width:279px;height:37px;background:#0070e0"></div>
<div class="t" style="left:806px;top:145.51px;font-size:17px;line-height:17px;color:#686868;letter-spacing:1.5px;font-weight:bold;">PHYSICS ASSET</div>
<div style="position:absolute;left:985px;top:152.9px;width:58px;height:2px;background:#5c5c5c"></div>
<div class="t" style="left:830px;top:182.11px;font-size:23.5px;line-height:23.5px;color:#ffffff;letter-spacing:0.192px;">Physics Asset</div>
<svg class="ic" style="left:1033px;top:184.0px" width="16" height="18" viewBox="0 0 16 18"><path d="M4 2 L11 9 L4 16" fill="none" stroke="#c4c4c4" stroke-width="2.6"/></svg>
<div class="t" style="left:806px;top:223.61px;font-size:17px;line-height:17px;color:#686868;letter-spacing:1.5px;font-weight:bold;">ANIM ASSETS</div>
<div style="position:absolute;left:963px;top:231.0px;width:80px;height:2px;background:#5c5c5c"></div>
<svg class="ic" style="left:832px;top:259.60px" width="24" height="24" viewBox="0 0 24 24"><g transform="translate(1.2,-1.6) scale(1.0)"><circle cx="15.1" cy="1.3" r="2.3" fill="#6aacf0"/><path d="M3.2 6.6 L7.2 4.2 L10.2 5.2" fill="none" stroke="#6aacf0" stroke-width="1.8" stroke-linecap="round" stroke-linejoin="round"/><path d="M9.6 6.2 L11.2 13.0" fill="none" stroke="#6aacf0" stroke-width="3.8" stroke-linecap="round"/><path d="M11.2 8.2 L12.9 9.4 L17.6 9.6" fill="none" stroke="#6aacf0" stroke-width="1.5" stroke-linecap="round" stroke-linejoin="round"/><path d="M10.2 12.4 L6.0 14.4 L0.6 14.6" fill="none" stroke="#6aacf0" stroke-width="1.7" stroke-linecap="round" stroke-linejoin="round"/><path d="M11.2 13.2 L14.2 15.6 L14.6 19.4" fill="none" stroke="#6aacf0" stroke-width="1.8" stroke-linecap="round" stroke-linejoin="round"/></g><rect x="12" y="18.2" width="3" height="3" fill="#6aacf0"/><path d="M15 19.7 H17.8 M17.8 16.4 V22.8 M17.8 16.4 H20.3 M17.8 22.8 H20.3" stroke="#6aacf0" stroke-width="0.9" fill="none"/><rect x="20.2" y="15.0" width="3" height="3" fill="#6aacf0"/><rect x="20.2" y="21.2" width="3" height="3" fill="#6aacf0"/></svg>
<div class="t" style="left:874px;top:259.71px;font-size:23.5px;line-height:23.5px;color:#ffffff;letter-spacing:-0.062px;">Anim Blueprint</div>
<svg class="ic" style="left:832px;top:296.50px" width="24" height="24" viewBox="0 0 24 24"><g transform="translate(0.0,0.6) scale(0.88)"><circle cx="14.0" cy="3.4" r="2.3" fill="#ababab"/><path d="M3.2 6.6 L7.2 4.2 L10.2 5.2" fill="none" stroke="#ababab" stroke-width="1.8" stroke-linecap="round" stroke-linejoin="round"/><path d="M9.6 6.2 L11.2 13.0" fill="none" stroke="#ababab" stroke-width="3.8" stroke-linecap="round"/><path d="M11.2 8.2 L12.9 9.4 L17.6 9.6" fill="none" stroke="#ababab" stroke-width="1.5" stroke-linecap="round" stroke-linejoin="round"/><path d="M10.2 12.4 L6.0 14.4 L0.6 14.6" fill="none" stroke="#ababab" stroke-width="1.7" stroke-linecap="round" stroke-linejoin="round"/><path d="M11.2 13.2 L14.2 15.6 L14.6 19.4" fill="none" stroke="#ababab" stroke-width="1.8" stroke-linecap="round" stroke-linejoin="round"/></g><path d="M12.4 14.4 L18.2 11.6 L24.1 14.4 L18.2 17.2 Z" fill="#ababab"/><path d="M12.4 17.4 L18.2 20.2 L24.1 17.4 M12.4 20.4 L18.2 23.2 L24.1 20.4" stroke="#ababab" stroke-width="1.4" fill="none"/></svg>
<div class="t" style="left:874px;top:296.61px;font-size:23.5px;line-height:23.5px;color:#ffffff;letter-spacing:-0.1px;">Anim Composite</div>
<svg class="ic" style="left:832px;top:334.30px" width="24" height="24" viewBox="0 0 24 24"><g transform="translate(3.0,0.4) scale(0.85)"><circle cx="16.7" cy="2.7" r="2.3" fill="#ababab"/><path d="M3.2 6.6 L7.2 4.2 L10.2 5.2" fill="none" stroke="#ababab" stroke-width="1.8" stroke-linecap="round" stroke-linejoin="round"/><path d="M9.6 6.2 L11.2 13.0" fill="none" stroke="#ababab" stroke-width="3.8" stroke-linecap="round"/><path d="M11.2 8.2 L12.9 9.4 L17.6 9.6" fill="none" stroke="#ababab" stroke-width="1.5" stroke-linecap="round" stroke-linejoin="round"/><path d="M10.2 12.4 L6.0 14.4 L0.6 14.6" fill="none" stroke="#ababab" stroke-width="1.7" stroke-linecap="round" stroke-linejoin="round"/><path d="M11.2 13.2 L14.2 15.6 L14.6 19.4" fill="none" stroke="#ababab" stroke-width="1.8" stroke-linecap="round" stroke-linejoin="round"/></g><rect x="-0.1" y="16.8" width="6.2" height="4.7" fill="#7b7b7b"/><rect x="8.8" y="16.8" width="7" height="4.7" fill="#7b7b7b"/><rect x="18.6" y="16.8" width="6.6" height="4.7" fill="#7b7b7b"/><rect x="-0.1" y="23" width="25.3" height="1.8" fill="#ababab"/></svg>
<div class="t" style="left:874px;top:334.41px;font-size:23.5px;line-height:23.5px;color:#ffffff;letter-spacing:-0.055px;">Anim Montage</div>
<div class="t" style="left:806px;top:376.51px;font-size:17px;line-height:17px;color:#686868;letter-spacing:1.5px;font-weight:bold;">BLEND SPACES</div>
<div style="position:absolute;left:976px;top:383.9px;width:67px;height:2px;background:#5c5c5c"></div>
<svg class="ic" style="left:832px;top:411.40px" width="24" height="24" viewBox="0 0 24 24"><circle cx="7" cy="4.6" r="2.6" fill="#7b7b7b"/><path d="M4.6 8.3 H9.4 V15.4 H8.8 V22.6 H7.6 V15.4 H6.4 V22.6 H5.2 V15.4 H4.6 Z" fill="#7b7b7b"/><path d="M4.8 9 L1 12.8 M9.2 9 L13 12.8" stroke="#7b7b7b" stroke-width="1.4" stroke-linecap="round" fill="none"/><circle cx="18" cy="4.6" r="2.6" fill="#ababab"/><path d="M15.6 8.4 H20.2 V15.4 H19.6 V22.6 H18.4 V15.4 H17.4 V22.6 H16.2 V15.4 H15.6 Z" fill="#ababab"/><path d="M16 9 L12.2 4.9 M19.8 9 L24.2 4.9" stroke="#ababab" stroke-width="1.4" stroke-linecap="round" fill="none"/></svg>
<div class="t" style="left:872px;top:411.51px;font-size:23.5px;line-height:23.5px;color:#ffffff;letter-spacing:-0.35px;">Blend Space</div>
<svg class="ic" style="left:832px;top:449.00px" width="24" height="24" viewBox="0 0 24 24"><circle cx="7" cy="4.6" r="2.6" fill="#7b7b7b"/><path d="M4.6 8.3 H9.4 V15.4 H8.8 V22.6 H7.6 V15.4 H6.4 V22.6 H5.2 V15.4 H4.6 Z" fill="#7b7b7b"/><path d="M4.8 9 L1 12.8 M9.2 9 L13 12.8" stroke="#7b7b7b" stroke-width="1.4" stroke-linecap="round" fill="none"/><circle cx="18" cy="4.6" r="2.6" fill="#ababab"/><path d="M15.6 8.4 H20.2 V15.4 H19.6 V22.6 H18.4 V15.4 H17.4 V22.6 H16.2 V15.4 H15.6 Z" fill="#ababab"/><path d="M16 9 L12.2 4.9 M19.8 9 L24.2 4.9" stroke="#ababab" stroke-width="1.4" stroke-linecap="round" fill="none"/><text x="18.5" y="24.6" font-family="Liberation Sans" font-size="5.5" fill="#7b7b7b">1D</text></svg>
<div class="t" style="left:872px;top:449.11px;font-size:23.5px;line-height:23.5px;color:#ffffff;letter-spacing:-0.408px;">Blend Space 1D</div>
<div class="t" style="left:806px;top:491.61px;font-size:17px;line-height:17px;color:#686868;letter-spacing:1.5px;font-weight:bold;">AIM OFFSETS</div>
<div style="position:absolute;left:961px;top:499.0px;width:82px;height:2px;background:#5c5c5c"></div>
<div class="t" style="left:832px;top:526.41px;font-size:23.5px;line-height:23.5px;color:#ffffff;letter-spacing:0.022px;">Aim Offset</div>
<div class="t" style="left:832px;top:564.31px;font-size:23.5px;line-height:23.5px;color:#ffffff;letter-spacing:-0.092px;">Aim Offset 1D</div>
<div class="t" style="left:806px;top:606.21px;font-size:17px;line-height:17px;color:#686868;letter-spacing:1.5px;font-weight:bold;">CONTROL RIG</div>
<div style="position:absolute;left:962px;top:613.6px;width:81px;height:2px;background:#5c5c5c"></div>
<div class="t" style="left:831px;top:641.51px;font-size:23.5px;line-height:23.5px;color:#ffffff;letter-spacing:-0.05px;">Control Rig</div>
<div style="position:absolute;left:1068px;top:283px;width:543px;height:58px;background:#efefef;border:3px solid #060606;border-top:2.6px solid #262626;box-shadow:inset -3px -3px 4px rgba(0,0,0,0.14)"></div>
<div class="t" style="left:1087.5px;top:304.48px;font-size:22px;line-height:22px;color:#111111;letter-spacing:-0.47px;">Creates an Anim Blueprint using the selected skeleton.</div>

</body></html>
